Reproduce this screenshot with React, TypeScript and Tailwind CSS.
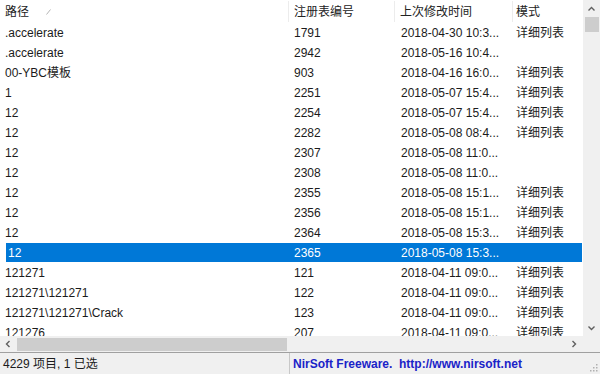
const rows: [string, string, string, string][] = [
  ['.accelerate', '1791', '2018-04-30 10:3...', '详细列表'],
  ['.accelerate', '2942', '2018-05-16 10:4...', ''],
  ['00-YBC模板', '903', '2018-04-16 16:0...', '详细列表'],
  ['1', '2251', '2018-05-07 15:4...', '详细列表'],
  ['12', '2254', '2018-05-07 15:4...', '详细列表'],
  ['12', '2282', '2018-05-08 08:4...', '详细列表'],
  ['12', '2307', '2018-05-08 11:0...', ''],
  ['12', '2308', '2018-05-08 11:0...', ''],
  ['12', '2355', '2018-05-08 15:1...', '详细列表'],
  ['12', '2356', '2018-05-08 15:1...', '详细列表'],
  ['12', '2364', '2018-05-08 15:3...', '详细列表'],
  ['12', '2365', '2018-05-08 15:3...', ''],
  ['121271', '121', '2018-04-11 09:0...', '详细列表'],
  ['121271\\121271', '122', '2018-04-11 09:0...', '详细列表'],
  ['121271\\121271\\Crack', '123', '2018-04-11 09:0...', '详细列表'],
  ['121276', '207', '2018-04-11 09:0...', '详细列表'],
];

const SELECTED = 11;

function Chevron({ dir }: { dir: 'up' | 'down' | 'left' | 'right' }) {
  const d = {
    up: 'M1.5 5.5 L4.5 2.5 L7.5 5.5',
    down: 'M1.5 2.5 L4.5 5.5 L7.5 2.5',
    left: 'M5.5 1 L2.5 4 L5.5 7',
    right: 'M2.5 1 L5.5 4 L2.5 7',
  }[dir];
  return (
    <svg width="9" height="8" viewBox="0 0 9 8">
      <path d={d} fill="none" stroke="#606060" strokeWidth="1.4" />
    </svg>
  );
}

export default function App() {
  return (
    <div
      className="w-[600px] h-[374px] bg-white flex flex-col overflow-hidden text-[12px] text-[#1b1b1b]"
      style={{ fontFamily: '"Liberation Sans", "Noto Sans CJK SC", sans-serif' }}
    >
      {/* 列表 + 竖向滚动条 */}
      <div className="flex h-[336px]">
        <div className="w-[583px] flex flex-col overflow-hidden">
          {/* 表头 */}
          <div className="flex h-[22px] shrink-0 items-center text-[#222] pt-[1px]">
            <div className="w-[289px] pl-[5px] flex items-center gap-[17px] border-r border-[#ececec] h-full">
              <span>路径</span>
              <svg width="5" height="6" viewBox="0 0 5 6">
                <path d="M0.5 5.5 L4.5 0.5" stroke="#b5b5b5" strokeWidth="1" />
              </svg>
            </div>
            <div className="w-[106px] pl-[5px] flex items-center border-r border-[#ececec] h-full">注册表编号</div>
            <div className="w-[118px] pl-[5px] flex items-center border-r border-[#ececec] h-full">上次修改时间</div>
            <div className="w-[70px] pl-[3px] flex items-center h-full">模式</div>
          </div>
          {/* 行 */}
          {rows.map((r, i) => {
            const sel = i === SELECTED;
            return (
              <div key={i} className="flex h-[20px] shrink-0 items-center whitespace-nowrap pt-[1px]">
                <div className="w-[289px] h-full flex items-center pl-[5px]">
                  {sel ? (
                    <div className="h-full flex-1 flex items-center bg-[#0078d7] text-white ml-[1px] pl-[2px]">{r[0]}</div>
                  ) : (
                    r[0]
                  )}
                </div>
                <div className={`w-[106px] h-full flex items-center pl-[5px] ${sel ? 'bg-[#0078d7] text-white' : ''}`}>{r[1]}</div>
                <div className={`w-[118px] h-full flex items-center pl-[6px] ${sel ? 'bg-[#0078d7] text-white' : ''}`}>{r[2]}</div>
                <div className={`w-[69px] h-full flex items-center pl-[3px] ${sel ? 'bg-[#0078d7] text-white' : ''}`}>{r[3]}</div>
              </div>
            );
          })}
        </div>
        {/* 竖向滚动条 */}
        <div className="w-[17px] bg-[#f0f0f0] flex flex-col items-center">
          <div className="h-[17px] flex items-center justify-center">
            <Chevron dir="up" />
          </div>
          <div className="w-[14px] h-[15px] bg-[#cdcdcd]" />
          <div className="flex-1" />
          <div className="h-[17px] flex items-center justify-center">
            <Chevron dir="down" />
          </div>
        </div>
      </div>

      {/* 横向滚动条 */}
      <div className="flex h-[16px] shrink-0">
        <div className="w-[583px] bg-[#f0f0f0] flex items-center">
          <div className="w-[17px] flex justify-center">
            <Chevron dir="left" />
          </div>
          <div className="w-[270px] h-[13px] bg-[#cdcdcd]" />
          <div className="flex-1" />
          <div className="w-[17px] flex justify-center">
            <Chevron dir="right" />
          </div>
        </div>
        <div className="w-[17px] bg-[#f0f0f0]" />
      </div>

      {/* 状态栏 */}
      <div className="flex h-[22px] shrink-0 bg-[#f0f0f0] border-t border-[#a0a0a0] items-center">
        <div className="w-[290px] pl-[3px] border-r border-[#c8c8c8] h-full flex items-center">4229 项目, 1 已选</div>
        <div className="flex-1 pl-[3px] flex items-center font-bold text-[#1a23c8]">
          NirSoft Freeware.&nbsp;&nbsp;http://www.nirsoft.net
        </div>
        <div className="w-[14px] h-full flex items-end justify-end pb-[2px] pr-[2px]">
          <svg width="9" height="9" viewBox="0 0 9 9" fill="#b0b0b0">
            <rect x="7" y="1" width="1.5" height="1.5" />
            <rect x="4" y="4" width="1.5" height="1.5" />
            <rect x="7" y="4" width="1.5" height="1.5" />
            <rect x="1" y="7" width="1.5" height="1.5" />
            <rect x="4" y="7" width="1.5" height="1.5" />
            <rect x="7" y="7" width="1.5" height="1.5" />
          </svg>
        </div>
      </div>
    </div>
  );
}
